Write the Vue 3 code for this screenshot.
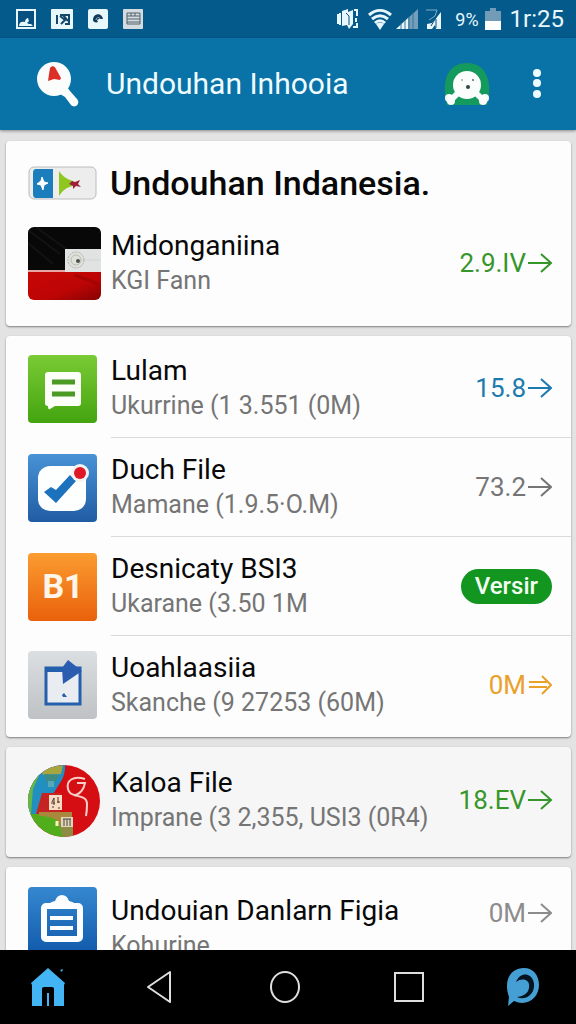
<template>
  <div class="screen">
    <div class="status-bar">
      <div class="status-left">
        <svg width="20" height="20" viewBox="0 0 20 20">
          <rect x="1" y="1" width="18" height="18" fill="#07507f" stroke="#e8f7fc" stroke-width="2" />
          <path d="M3 17c0-4 3-5 6-4 0-3 2-4 3-4l1 3-2 2 2 1h2l2 2z" fill="#e8f7fc" />
        </svg>
        <svg width="22" height="20" viewBox="0 0 22 20">
          <rect width="22" height="20" rx="1" fill="#e8f7fc" />
          <path d="M6 6v9M9 6h9v9h-4M9 7l5 4-4 4M12 6l5 6" fill="none" stroke="#174869" stroke-width="2" />
        </svg>
        <svg width="20" height="20" viewBox="0 0 20 20">
          <rect width="20" height="20" rx="2" fill="#e8f7fc" />
          <path d="M5 11c0-7 9-8 10-1h-4l-2 1 1 2c-2 1-5 0-5-2z" fill="#123b5b" />
          <path d="M8 11c0-3 4-3 4-1" fill="none" stroke="#8fb4c8" stroke-width="1" />
        </svg>
        <svg width="20" height="20" viewBox="0 0 20 20">
          <rect width="20" height="20" rx="1" fill="#d5dce0" />
          <path d="M4 4h13v11H4zM4 7h13M4 10h13M4 13h13M8 4v3M12 4v3" fill="none" stroke="#53616a" stroke-width="1" />
        </svg>
      </div>
      <div class="status-right">
        <svg width="21" height="22" viewBox="0 0 21 22">
          <path d="M5 3l6-2v3l5-2v14l-4 5-2-4-5 1z" fill="#e8f7fc" />
          <path d="M9 5l3 3v9" fill="none" stroke="#07507f" stroke-width="1" />
          <path d="M1 6v10M3 5v12M17 2h3v6M19 10v4M20 15v4h-4" fill="none" stroke="#e8f7fc" stroke-width="2" />
        </svg>
        <svg class="wifi" width="24" height="21" viewBox="0 0 24 21">
          <path d="M1 6c7-6 15-6 22 0M4 10c5-4 11-4 16 0M7 14c3-3 7-3 10 0" fill="none" stroke="#e8f7fc" stroke-width="3" />
          <path d="M8 15c3-2 5-2 8 0l-4 6z" fill="#e8f7fc" />
        </svg>
        <svg class="signal" width="22" height="20" viewBox="0 0 22 20">
          <path d="M0 20l12-11v11z" fill="#e8f7fc" />
          <path d="M12 9l10-9v20H12z" fill="#739fbc" />
          <path d="M5 14v6M9 11v9M13 8v12M17 4v16" stroke="#3c7297" stroke-width="1" />
        </svg>
        <svg class="signal-off" width="16" height="20" viewBox="0 0 16 20">
          <path d="M1 20v-5l5-1 9-11v17h-5l-1-4-3 4z" fill="#e8f7fc" />
          <path d="M0 1h11l-2 6-6 4" fill="none" stroke="#7eabc5" stroke-width="1" />
          <path d="M14 2L5 17M10 10v9" stroke="#07507f" stroke-width="1" />
        </svg>
        <span class="percent">9%</span>
        <svg class="battery" width="16" height="22" viewBox="0 0 16 22">
          <path d="M0 3h5V0h6v3h5v11H0z" fill="#729bb8" />
          <path d="M0 13h16v9H0z" fill="#fff" />
        </svg>
        <span class="clock">1r:25</span>
      </div>
    </div>

    <header class="app-bar">
      <button class="bar-button" type="button" aria-label="Search">
        <svg width="44" height="46" viewBox="0 0 44 46">
          <circle cx="18" cy="18" r="17" fill="#fbfdfc" />
          <path d="M24 33l7-7 3 4 7 8c4 5-2 10-6 6l-6-8z" fill="#fbfdfc" />
          <path d="M14 7c2-3 5-2 6 1l5 9-1 2-6-1-6 2 1-7z" fill="#da3028" />
        </svg>
      </button>
      <h1 class="app-title">Undouhan Inhooia</h1>
      <button class="bar-button profile" type="button" aria-label="Profile">
        <svg width="46" height="44" viewBox="0 0 46 44">
          <path d="M3 43C-3 20 3 1 23 1s26 20 20 42z" fill="#159a5d" />
          <path d="M14 31l-8 8M32 31l8 8" stroke="#fbfdfc" stroke-width="6" stroke-linecap="round" />
          <circle cx="5" cy="36" r="4" fill="#fbfdfc" />
          <circle cx="41" cy="36" r="4" fill="#fbfdfc" />
          <circle cx="7" cy="39" r="4" fill="#fbfdfc" />
          <circle cx="39" cy="39" r="4" fill="#fbfdfc" />
          <circle cx="23" cy="23" r="14" fill="#fbfdfc" />
          <circle cx="18" cy="18" r="1" fill="#9fb0a8" />
          <circle cx="29" cy="18" r="1" fill="#4d6b5e" />
          <circle cx="24" cy="25" r="2" fill="#294b3e" />
        </svg>
      </button>
      <button class="bar-button menu" type="button" aria-label="More">
        <svg width="10" height="32" viewBox="0 0 10 32">
          <circle cx="5" cy="5" r="4" fill="#effcff" />
          <circle cx="5" cy="15" r="4" fill="#effcff" />
          <circle cx="5" cy="26" r="4" fill="#effcff" />
        </svg>
      </button>
    </header>

    <main class="content">
      <section v-for="(card, i) in cards" :key="i" class="card" :class="card.kind">
        <div v-if="card.heading" class="card-heading">
          <svg class="heading-icon" width="70" height="36" viewBox="0 0 70 36">
            <rect x="1" y="2" width="67" height="32" rx="5" fill="#ededed" stroke="#b9bcbe" />
            <path d="M8 4h17v29H8q-3 0-3-4V8q0-4 3-4z" fill="#1b7dbb" />
            <path d="M14 12l2 5 4 1-4 2-1 5-2-5-4-1 4-3z" fill="#fff" stroke="#fff" />
            <path d="M31 6c4 6 8 8 14 10v5c-6 1-10 4-14 10z" fill="#8fc721" />
            <path d="M44 16l3 1 5-2-2 4 3 3-5-1-3 3v-3l-4-2z" fill="#9d2037" />
          </svg>
          <h2>{{ card.heading }}</h2>
        </div>
        <ul class="rows">
          <li v-for="item in card.items" :key="item.title" class="row">
            <div class="row-icon">
              <svg v-if="item.icon === 'flag'" width="73" height="73" viewBox="0 0 73 73">
                <defs>
                  <clipPath id="flag-clip"><rect width="73" height="73" rx="6" /></clipPath>
                  <linearGradient id="flag-red" x1="0" y1="0" x2="1" y2="1">
                    <stop offset="0" stop-color="#c80606" />
                    <stop offset="0.6" stop-color="#bd0505" />
                    <stop offset="1" stop-color="#860303" />
                  </linearGradient>
                </defs>
                <g clip-path="url(#flag-clip)">
                  <rect width="73" height="45" fill="#080808" />
                  <path d="M0 3l32 24M8 0l34 25M0 16l25 21" stroke="#131312" stroke-width="2" />
                  <rect y="44" width="73" height="29" fill="url(#flag-red)" />
                  <path d="M47 48c9 5 17 4 26 11" fill="none" stroke="#a50404" stroke-width="3" />
                  <rect y="43" width="40" height="2" fill="#e7a4a4" />
                  <rect x="37" y="22" width="36" height="23" fill="#e1e2e2" />
                  <path d="M56 33h17" stroke="#d2d5d8" />
                  <circle cx="48" cy="33" r="8" fill="#e0e1db" stroke="#b0b2aa" stroke-width="1" stroke-dasharray="2 1" />
                  <circle cx="48" cy="33" r="5" fill="none" stroke="#b9bbb4" stroke-width="1" />
                  <circle cx="50" cy="34" r="2" fill="#4b504b" />
                </g>
              </svg>

              <svg v-else-if="item.icon === 'message'" width="69" height="68" viewBox="0 0 69 68">
                <defs>
                  <linearGradient id="green-tile" x1="0" y1="0" x2="0" y2="1">
                    <stop offset="0" stop-color="#7acb35" />
                    <stop offset="1" stop-color="#43a40f" />
                  </linearGradient>
                </defs>
                <rect width="69" height="68" rx="4" fill="url(#green-tile)" />
                <path d="M20 17h30q3 0 3 3v28q0 3-3 3H27l-5 3q-2 1-2-3-3 0-3-3V20q0-3 3-3z" fill="#fcfff8" />
                <path d="M24 27h23M24 39h23" stroke="#4b9a23" stroke-width="5" />
              </svg>

              <svg v-else-if="item.icon === 'check'" width="69" height="68" viewBox="0 0 69 68">
                <defs>
                  <linearGradient id="blue-tile" x1="0" y1="0" x2="0" y2="1">
                    <stop offset="0" stop-color="#4892d5" />
                    <stop offset="1" stop-color="#205ca4" />
                  </linearGradient>
                </defs>
                <rect width="69" height="68" rx="4" fill="url(#blue-tile)" />
                <rect x="10" y="12" width="48" height="45" rx="12" fill="#fdfefe" />
                <path d="M16 38l7-5 5 3 14-15 6 6-20 22z" fill="#1d72bd" />
                <circle cx="52" cy="19" r="9" fill="#f3f3f4" />
                <circle cx="52" cy="19" r="6" fill="#df1726" />
              </svg>

              <svg v-else-if="item.icon === 'b1'" width="69" height="68" viewBox="0 0 69 68">
                <defs>
                  <linearGradient id="orange-tile" x1="0" y1="0" x2="0" y2="1">
                    <stop offset="0" stop-color="#fb9c30" />
                    <stop offset="1" stop-color="#e9610c" />
                  </linearGradient>
                </defs>
                <rect width="69" height="68" rx="4" fill="url(#orange-tile)" />
                <text class="tile-text" x="35" y="45" text-anchor="middle">B1</text>
              </svg>

              <svg v-else-if="item.icon === 'share'" width="69" height="68" viewBox="0 0 69 68">
                <defs>
                  <linearGradient id="grey-tile" x1="0" y1="0" x2="0" y2="1">
                    <stop offset="0" stop-color="#dcdfe1" />
                    <stop offset="1" stop-color="#bfc2c5" />
                  </linearGradient>
                </defs>
                <rect width="69" height="68" rx="4" fill="url(#grey-tile)" />
                <rect x="18" y="17" width="34" height="36" fill="#e9edf2" stroke="#245fae" stroke-width="3" />
                <path d="M17 16h20v5H17z" fill="#245fae" />
                <path d="M34 17l6-8 14 11-19 13z" fill="#2a5db0" />
                <path d="M34 44l2-2 3 4h-4z" fill="#245fae" />
              </svg>

              <svg v-else-if="item.icon === 'globe'" width="73" height="73" viewBox="0 0 73 73">
                <defs>
                  <clipPath id="globe-clip"><circle cx="36" cy="37" r="36" /></clipPath>
                </defs>
                <g clip-path="url(#globe-clip)">
                  <rect width="73" height="73" fill="#d40e13" />
                  <path d="M0 0h37c1 14-6 19-10 27L11 50H0z" fill="#218fc0" />
                  <path d="M0 0h16L5 25 3 50H0z" fill="#66b843" />
                  <path d="M13 5l22-4-2 9-18 1z" fill="#a7a53e" />
                  <path d="M16 10l15 1-3 6-9 2z" fill="#3e8b83" />
                  <path d="M20 17h6v6h-6z" fill="#55a8b5" />
                  <path d="M14 29h19l-1 21H8z" fill="#c52422" />
                  <path d="M0 50h31l5 23H0z" fill="#52ad1c" />
                  <path d="M11 48h33v23H34V62c-5-8-14-10-23-10z" fill="#a9873d" />
                  <path d="M31 60h14v13H35z" fill="#8e8b44" />
                </g>
                <rect x="21" y="31" width="13" height="15" fill="#f6ddc3" />
                <path d="M24 38l2-4v7M30 33v6M23 39h4M29 38h3M24 43h2M30 44h2" fill="none" stroke="#563226" stroke-width="1" />
                <rect x="33" y="53" width="12" height="10" fill="#e0d7bc" />
                <path d="M35 55h8M36 55v7M39 55v7M42 55v7" stroke="#4d473b" />
                <path d="M29 57v5" stroke="#fff0b7" stroke-width="3" />
                <path d="M57 15c-12-4-19 2-17 10 1 4 4 6 8 6 5-2 8-7 9-12h-8M46 31c7 2 13 2 13 9 0 4 0 7-1 12" fill="none" stroke="#f8cfc6" stroke-width="2" />
              </svg>

              <svg v-else width="69" height="68" viewBox="0 0 69 68">
                <defs>
                  <linearGradient id="clip-tile" x1="0" y1="0" x2="0" y2="1">
                    <stop offset="0" stop-color="#3588d0" />
                    <stop offset="1" stop-color="#1159ab" />
                  </linearGradient>
                </defs>
                <rect width="69" height="68" rx="4" fill="url(#clip-tile)" />
                <rect x="16" y="19" width="36" height="33" rx="2" fill="none" stroke="#fbfdff" stroke-width="6" />
                <path d="M20 19q1-4 7-5 2-6 7-6t7 6q6 1 7 5z" fill="#fbfdff" />
                <path d="M22 31h23M22 41h23" stroke="#fbfdff" stroke-width="4" />
              </svg>
            </div>
            <div class="row-body">
              <div class="row-text">
                <a class="row-title" href="#">{{ item.title }}</a>
                <span class="row-sub">{{ item.sub }}</span>
              </div>
              <button v-if="item.badge" class="badge" type="button">{{ item.badge }}</button>
              <button v-else class="value" :class="item.tone" type="button">
                {{ item.value }}
                <svg width="24" height="22" viewBox="0 0 24 22" fill="none" stroke="currentColor" stroke-width="2">
                  <path v-if="item.double" d="M1 8h18M1 13h18M14 2l9 9-9 9" />
                  <path v-else d="M0 11h22M13 2l10 9-10 9" />
                </svg>
              </button>
            </div>
          </li>
        </ul>
      </section>
    </main>

    <nav class="nav-bar">
      <button type="button" aria-label="Start">
        <svg width="34" height="38" viewBox="0 0 34 38">
          <path d="M0 15L17 0l17 15-1 2v21H23V21q0-2-2-2h-8q-2 0-2 2v17H1V17z" fill="#43b4f4" />
          <path d="M16 25h2v13h-2zM29 2l3-1-1 3z" fill="#43b4f4" />
        </svg>
      </button>
      <button type="button" aria-label="Back">
        <svg width="26" height="34" viewBox="0 0 26 34">
          <path d="M24 2v30L2 17z" fill="none" stroke="#dedede" stroke-width="2" stroke-linejoin="round" />
        </svg>
      </button>
      <button type="button" aria-label="Home">
        <svg width="32" height="34" viewBox="0 0 32 34">
          <ellipse cx="16" cy="17" rx="14" ry="15" fill="none" stroke="#dedede" stroke-width="2" />
        </svg>
      </button>
      <button type="button" aria-label="Recent">
        <svg width="32" height="32" viewBox="0 0 32 32">
          <rect x="2" y="2" width="28" height="28" fill="none" stroke="#dedede" stroke-width="2" />
        </svg>
      </button>
      <button type="button" aria-label="Chat">
        <svg width="34" height="40" viewBox="0 0 34 40">
          <path d="M2 39l1-9C-3 13 5 1 18 1c9 0 15 7 15 17 0 13-12 22-25 16z" fill="#469fd4" />
          <path d="M10 15c3-8 10-9 14-6 6 5 5 15 0 19-4 4-9 4-13 2 9-1 13-6 12-13-1-5-8-6-13-2z" fill="#031420" />
          <path d="M9 21c1-6 5-9 10-8 3 6 0 12-6 13-3 0-5-2-4-5z" fill="#469fd4" />
        </svg>
      </button>
    </nav>
  </div>
</template>

<script setup>
const cards = [
  {
    kind: 'featured',
    heading: 'Undouhan Indanesia.',
    items: [
      { icon: 'flag', title: 'Midonganiina', sub: 'KGI Fann', value: '2.9.IV', tone: 'green' }
    ]
  },
  {
    kind: 'list',
    items: [
      { icon: 'message', title: 'Lulam', sub: 'Ukurrine (1 3.551 (0M)', value: '15.8', tone: 'blue' },
      { icon: 'check', title: 'Duch File', sub: 'Mamane (1.9.5·O.M)', value: '73.2', tone: 'grey' },
      { icon: 'b1', title: 'Desnicaty BSI3', sub: 'Ukarane (3.50 1M', badge: 'Versir' },
      { icon: 'share', title: 'Uoahlaasiia', sub: 'Skanche (9 27253 (60M)', value: '0M', tone: 'amber', double: true }
    ]
  },
  {
    kind: 'muted',
    items: [
      { icon: 'globe', title: 'Kaloa File', sub: 'Imprane (3 2,355, USI3 (0R4)', value: '18.EV', tone: 'green' }
    ]
  },
  {
    kind: 'tall',
    items: [
      { icon: 'clipboard', title: 'Undouian Danlarn Figia', sub: 'Kohurine', value: '0M', tone: 'light' }
    ]
  }
]
</script>

<style>
body {
  margin: 0;
  background: #e3e3e4;
}
</style>

<style scoped>
.screen {
  height: 100vh;
  display: flex;
  flex-direction: column;
  overflow: hidden;
  background: #e3e3e4;
  font-family: Roboto, "Liberation Sans", sans-serif;
  color: #080808;
}

button {
  padding: 0;
  border: 0;
  background: none;
  font-family: inherit;
  cursor: pointer;
}

svg {
  display: block;
  flex-shrink: 0;
}

.status-bar {
  flex: 0 0 38px;
  display: flex;
  justify-content: space-between;
  align-items: center;
  padding: 0 12px 0 16px;
  background: #055a8c;
  color: #e8f7fc;
}

.status-left {
  display: flex;
  gap: 15px;
}

.status-right {
  display: flex;
  align-items: center;
}

.wifi {
  margin-left: 10px;
}

.signal {
  margin-left: 4px;
}

.signal-off {
  margin-left: 8px;
}

.percent {
  margin-left: 13px;
  font-size: 18px;
}

.battery {
  margin: 0 9px 0 6px;
}

.clock {
  font-size: 24px;
}

.app-bar {
  flex: 0 0 92px;
  display: flex;
  align-items: center;
  padding: 0 34px 0 36px;
  background: #0972a6;
  box-shadow: 0 1px 3px rgba(0, 0, 0, 0.4);
  z-index: 1;
}

.app-title {
  flex: 1;
  margin: 0 0 0 26px;
  font-size: 30px;
  font-weight: 400;
  line-height: 40px;
  color: #effcff;
}

.menu {
  margin-left: 42px;
}

.content {
  flex: 1;
  min-height: 0;
  display: flex;
  flex-direction: column;
  gap: 10px;
  padding: 11px 5px 0 6px;
  overflow: hidden;
}

.card {
  flex-shrink: 0;
  border-radius: 4px;
  background: #fdfdfd;
  box-shadow: 0 1px 2px rgba(0, 0, 0, 0.45);
}

.featured {
  padding: 10px 0 14px;
}

.list {
  padding: 3px 0;
}

.muted {
  padding: 4px 0 8px;
  background: #f6f6f6;
}

.card-heading {
  height: 63px;
  display: flex;
  align-items: center;
  gap: 12px;
  padding-left: 22px;
}

.card-heading h2 {
  margin: 0;
  font-size: 34px;
  font-weight: 500;
  line-height: 40px;
  white-space: nowrap;
}

.rows {
  margin: 0;
  padding: 0;
  list-style: none;
}

.row {
  display: flex;
  align-items: center;
  gap: 10px;
  padding-left: 22px;
}

.row-icon {
  flex: 0 0 73px;
}

.row-body {
  flex: 1;
  min-width: 0;
  min-height: 98px;
  display: flex;
  align-items: center;
  justify-content: space-between;
  padding-right: 19px;
}

.row:not(:last-child) .row-body {
  border-bottom: 1px solid #dadada;
}

.row-text {
  display: flex;
  flex-direction: column;
  white-space: nowrap;
}

.row-title {
  font-size: 28px;
  line-height: 35px;
  color: inherit;
  text-decoration: none;
}

.row-sub {
  font-size: 25px;
  line-height: 35px;
  color: #757575;
}

.value {
  display: flex;
  align-items: center;
  gap: 2px;
  font-size: 26px;
  line-height: 52px;
  white-space: nowrap;
}

.green {
  color: #36962a;
}

.blue {
  color: #1c7bae;
}

.grey {
  color: #757575;
}

.amber {
  color: #eba02a;
}

.light {
  color: #8c8c8c;
}

.badge {
  height: 35px;
  padding: 0 14px;
  border-radius: 18px;
  background: #139620;
  font-size: 24px;
  font-weight: 500;
  line-height: 35px;
  color: #f4fff4;
}

.tall .row,
.tall .row-body {
  align-items: flex-start;
}

.tall .row {
  padding-top: 20px;
}

.tall .row-text {
  padding-top: 6px;
}

.tile-text {
  font-size: 34px;
  font-weight: 700;
  fill: #fff5e8;
}

.nav-bar {
  flex: 0 0 74px;
  display: grid;
  grid-template-columns: 96fr 126fr 126fr 122fr 106fr;
  background: #000;
}

.nav-bar button {
  display: flex;
  align-items: center;
  justify-content: center;
}
</style>
